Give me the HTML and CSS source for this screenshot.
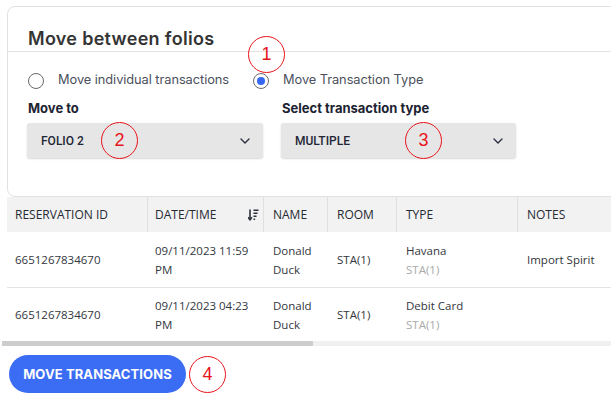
FILE: index.html
```html
<!DOCTYPE html>
<html lang="en">
<head>
<meta charset="utf-8">
<title>Move between folios</title>
<link rel="stylesheet" href="styles.css">
</head>
<body>
<div class="page">
  <section class="card">
    <header class="card-head">
      <h2 class="card-title">Move between folios</h2>
    </header>
    <div class="card-body">
      <div class="radios">
        <label class="radio radio-first"><span class="radio-ring"></span><span class="radio-text">Move individual transactions</span></label>
        <label class="radio"><span class="radio-ring is-checked"><span class="radio-dot"></span></span><span class="radio-text">Move Transaction Type</span></label>
      </div>
      <div class="fields">
        <div class="field">
          <div class="field-label">Move to</div>
          <div class="select">
            <span class="select-value">FOLIO 2</span>
            <svg class="chevron" width="10" height="6" viewBox="0 0 10 6"><path d="M1 1l4 4 4-4" fill="none" stroke="#2b3140" stroke-width="1.4" stroke-linecap="round" stroke-linejoin="round"/></svg>
          </div>
        </div>
        <div class="field">
          <div class="field-label">Select transaction type</div>
          <div class="select">
            <span class="select-value">MULTIPLE</span>
            <svg class="chevron" width="10" height="6" viewBox="0 0 10 6"><path d="M1 1l4 4 4-4" fill="none" stroke="#2b3140" stroke-width="1.4" stroke-linecap="round" stroke-linejoin="round"/></svg>
          </div>
        </div>
      </div>
    </div>
  </section>

  <div class="table-wrap">
    <table class="grid">
      <colgroup>
        <col class="c-res"><col class="c-date"><col class="c-name"><col class="c-room"><col class="c-type"><col class="c-notes">
      </colgroup>
      <thead>
        <tr class="head-row">
          <th>RESERVATION ID</th>
          <th><div class="th-sort"><span>DATE/TIME</span>
            <svg class="sort-icon" width="11" height="12" viewBox="0 0 11 12"><path d="M2 0.5v10" stroke="#2b2f3a" stroke-width="1.6" fill="none"/><path d="M0 8.2l2 2.8 2-2.8" stroke="#2b2f3a" stroke-width="1.4" fill="none" stroke-linejoin="round"/><path d="M5.5 1.2h5M5.5 4.2h4M5.5 7.2h3M5.5 10.2h1.6" stroke="#2b2f3a" stroke-width="1.5" fill="none"/></svg>
          </div></th>
          <th>NAME</th>
          <th>ROOM</th>
          <th>TYPE</th>
          <th>NOTES</th>
        </tr>
      </thead>
      <tbody>
        <tr class="row row-first">
          <td>6651267834670</td>
          <td>09/11/2023 11:59<br>PM</td>
          <td>Donald<br>Duck</td>
          <td>STA(1)</td>
          <td>Havana<br><span class="muted">STA(1)</span></td>
          <td>Import Spirit</td>
        </tr>
        <tr class="row row-last">
          <td>6651267834670</td>
          <td>09/11/2023 04:23<br>PM</td>
          <td>Donald<br>Duck</td>
          <td>STA(1)</td>
          <td>Debit Card<br><span class="muted">STA(1)</span></td>
          <td></td>
        </tr>
      </tbody>
    </table>
  </div>
  <div class="hscroll"><div class="hscroll-thumb"></div></div>

  <div class="actions">
    <button class="btn-primary" type="button">MOVE TRANSACTIONS</button>
  </div>

  <span class="marker marker-1">1</span>
  <span class="marker marker-2">2</span>
  <span class="marker marker-3">3</span>
  <span class="marker marker-4">4</span>
</div>
</body>
</html>
```

FILE: styles.css
```css
* { box-sizing: border-box; }

html, body {
  margin: 0;
  padding: 0;
  background: #ffffff;
  overflow: hidden;
}

.page {
  position: relative;
  width: 611px;
  height: 397px;
  overflow: hidden;
  font-family: "Inter", "Noto Sans", sans-serif;
}

/* ---------- card ---------- */
.card {
  margin: 6px 0 0 7px;
  width: 660px;
  height: 191px;
  border: 1px solid #e2e2e2;
  border-radius: 8px;
  background: #fff;
}

.card-head {
  height: 45px;
  padding: 20px 0 0 20px;
  border-bottom: 1px solid #e2e2e2;
}

.card-title {
  margin: 0;
  font-size: 18px;
  line-height: 24px;
  font-weight: 600;
  color: #343434;
  letter-spacing: 0.3px;
}

.card-body {
  padding: 21px 0 0 20px;
}

.radios {
  display: flex;
  align-items: center;
  height: 16px;
}

.radio {
  display: flex;
  align-items: center;
  gap: 14px;
  font-size: 12.8px;
  color: #4b505c;
  letter-spacing: -0.05px;
}

.radio-first {
  width: 225px;
  flex: none;
}

.radio-ring {
  width: 16px;
  height: 16px;
  border: 1.6px solid #6a6a6a;
  border-radius: 50%;
  display: flex;
  align-items: center;
  justify-content: center;
  flex: none;
}

.radio-dot {
  width: 8px;
  height: 8px;
  border-radius: 50%;
  background: #3567f2;
}

.radio-text {
  line-height: 16px;
  margin-top: -2px;
}

.fields {
  display: grid;
  grid-template-columns: 236px 235px;
  column-gap: 18px;
  margin-top: 11px;
  margin-left: -1px;
}

.field-label {
  font-size: 13px;
  line-height: 16px;
  font-weight: 700;
  color: #1c2333;
  padding-left: 1px;
  margin-bottom: 7px;
}

.select {
  height: 35px;
  background: #e6e6e6;
  border-radius: 3px;
  box-shadow: 0 1px 2px rgba(0, 0, 0, 0.16);
  display: flex;
  align-items: center;
  justify-content: space-between;
  padding: 0 13px 0 14px;
}

.select-value {
  font-family: "Roboto", "Inter", sans-serif;
  font-size: 12px;
  font-weight: 500;
  color: #1f2636;
}

.chevron { display: block; }

/* ---------- table ---------- */
.table-wrap {
  margin-left: 7px;
  width: 700px;
}

.grid {
  border-collapse: separate;
  border-spacing: 0;
  table-layout: fixed;
  width: 700px;
  font-family: "Open Sans", "Noto Sans", sans-serif;
  font-size: 11.5px;
  color: #33363d;
}

.c-res { width: 141px; }
.c-date { width: 116px; }
.c-name { width: 64px; }
.c-room { width: 69px; }
.c-type { width: 121px; }
.c-notes { width: 189px; }

.head-row { height: 35px; }

.head-row th {
  background: #f2f2f2;
  font-size: 12px;
  font-weight: 400;
  text-align: left;
  padding: 0 4px 0 9px;
  border-right: 1px solid #e0e0e0;
  color: #262a33;
  vertical-align: middle;
}

.head-row th:first-child,
.row td:first-child { padding-left: 8px; }

.head-row th:nth-child(2),
.row td:nth-child(2) { padding-left: 7px; }

.th-sort {
  display: flex;
  align-items: center;
  justify-content: space-between;
}

.sort-icon { display: block; }

.row td {
  padding: 0 4px 0 9px;
  line-height: 19px;
  vertical-align: middle;
}

.row-first { height: 56px; }
.row-first td { border-bottom: 1px solid #e3e3e3; }
.row-last { height: 53px; }

.muted { color: #a9a9a9; }

.hscroll {
  margin-left: 2px;
  width: 620px;
  height: 5px;
  background: #f0f0f0;
}

.hscroll-thumb {
  width: 311px;
  height: 5px;
  background: #cdcdcd;
}

/* ---------- actions ---------- */
.actions {
  padding: 9px 0 0 9px;
}

.btn-primary {
  width: 177px;
  height: 38px;
  border: none;
  border-radius: 19px;
  background: #3a6cf4;
  color: #ffffff;
  font-family: "Inter", "Noto Sans", sans-serif;
  font-size: 13px;
  font-weight: 700;
  letter-spacing: 0.1px;
  padding: 0;
}

/* ---------- annotation markers ---------- */
.marker {
  position: absolute;
  width: 37px;
  height: 37px;
  border: 1.5px solid #e8141b;
  border-radius: 50%;
  display: flex;
  align-items: center;
  justify-content: center;
  font-family: "Liberation Sans", Arial, sans-serif;
  font-size: 18px;
  color: #e8141b;
}

.marker-1 { left: 248px; top: 36px; }
.marker-2 { left: 101px; top: 122px; }
.marker-3 { left: 405px; top: 122px; }
.marker-4 { left: 189px; top: 356px; }
```
